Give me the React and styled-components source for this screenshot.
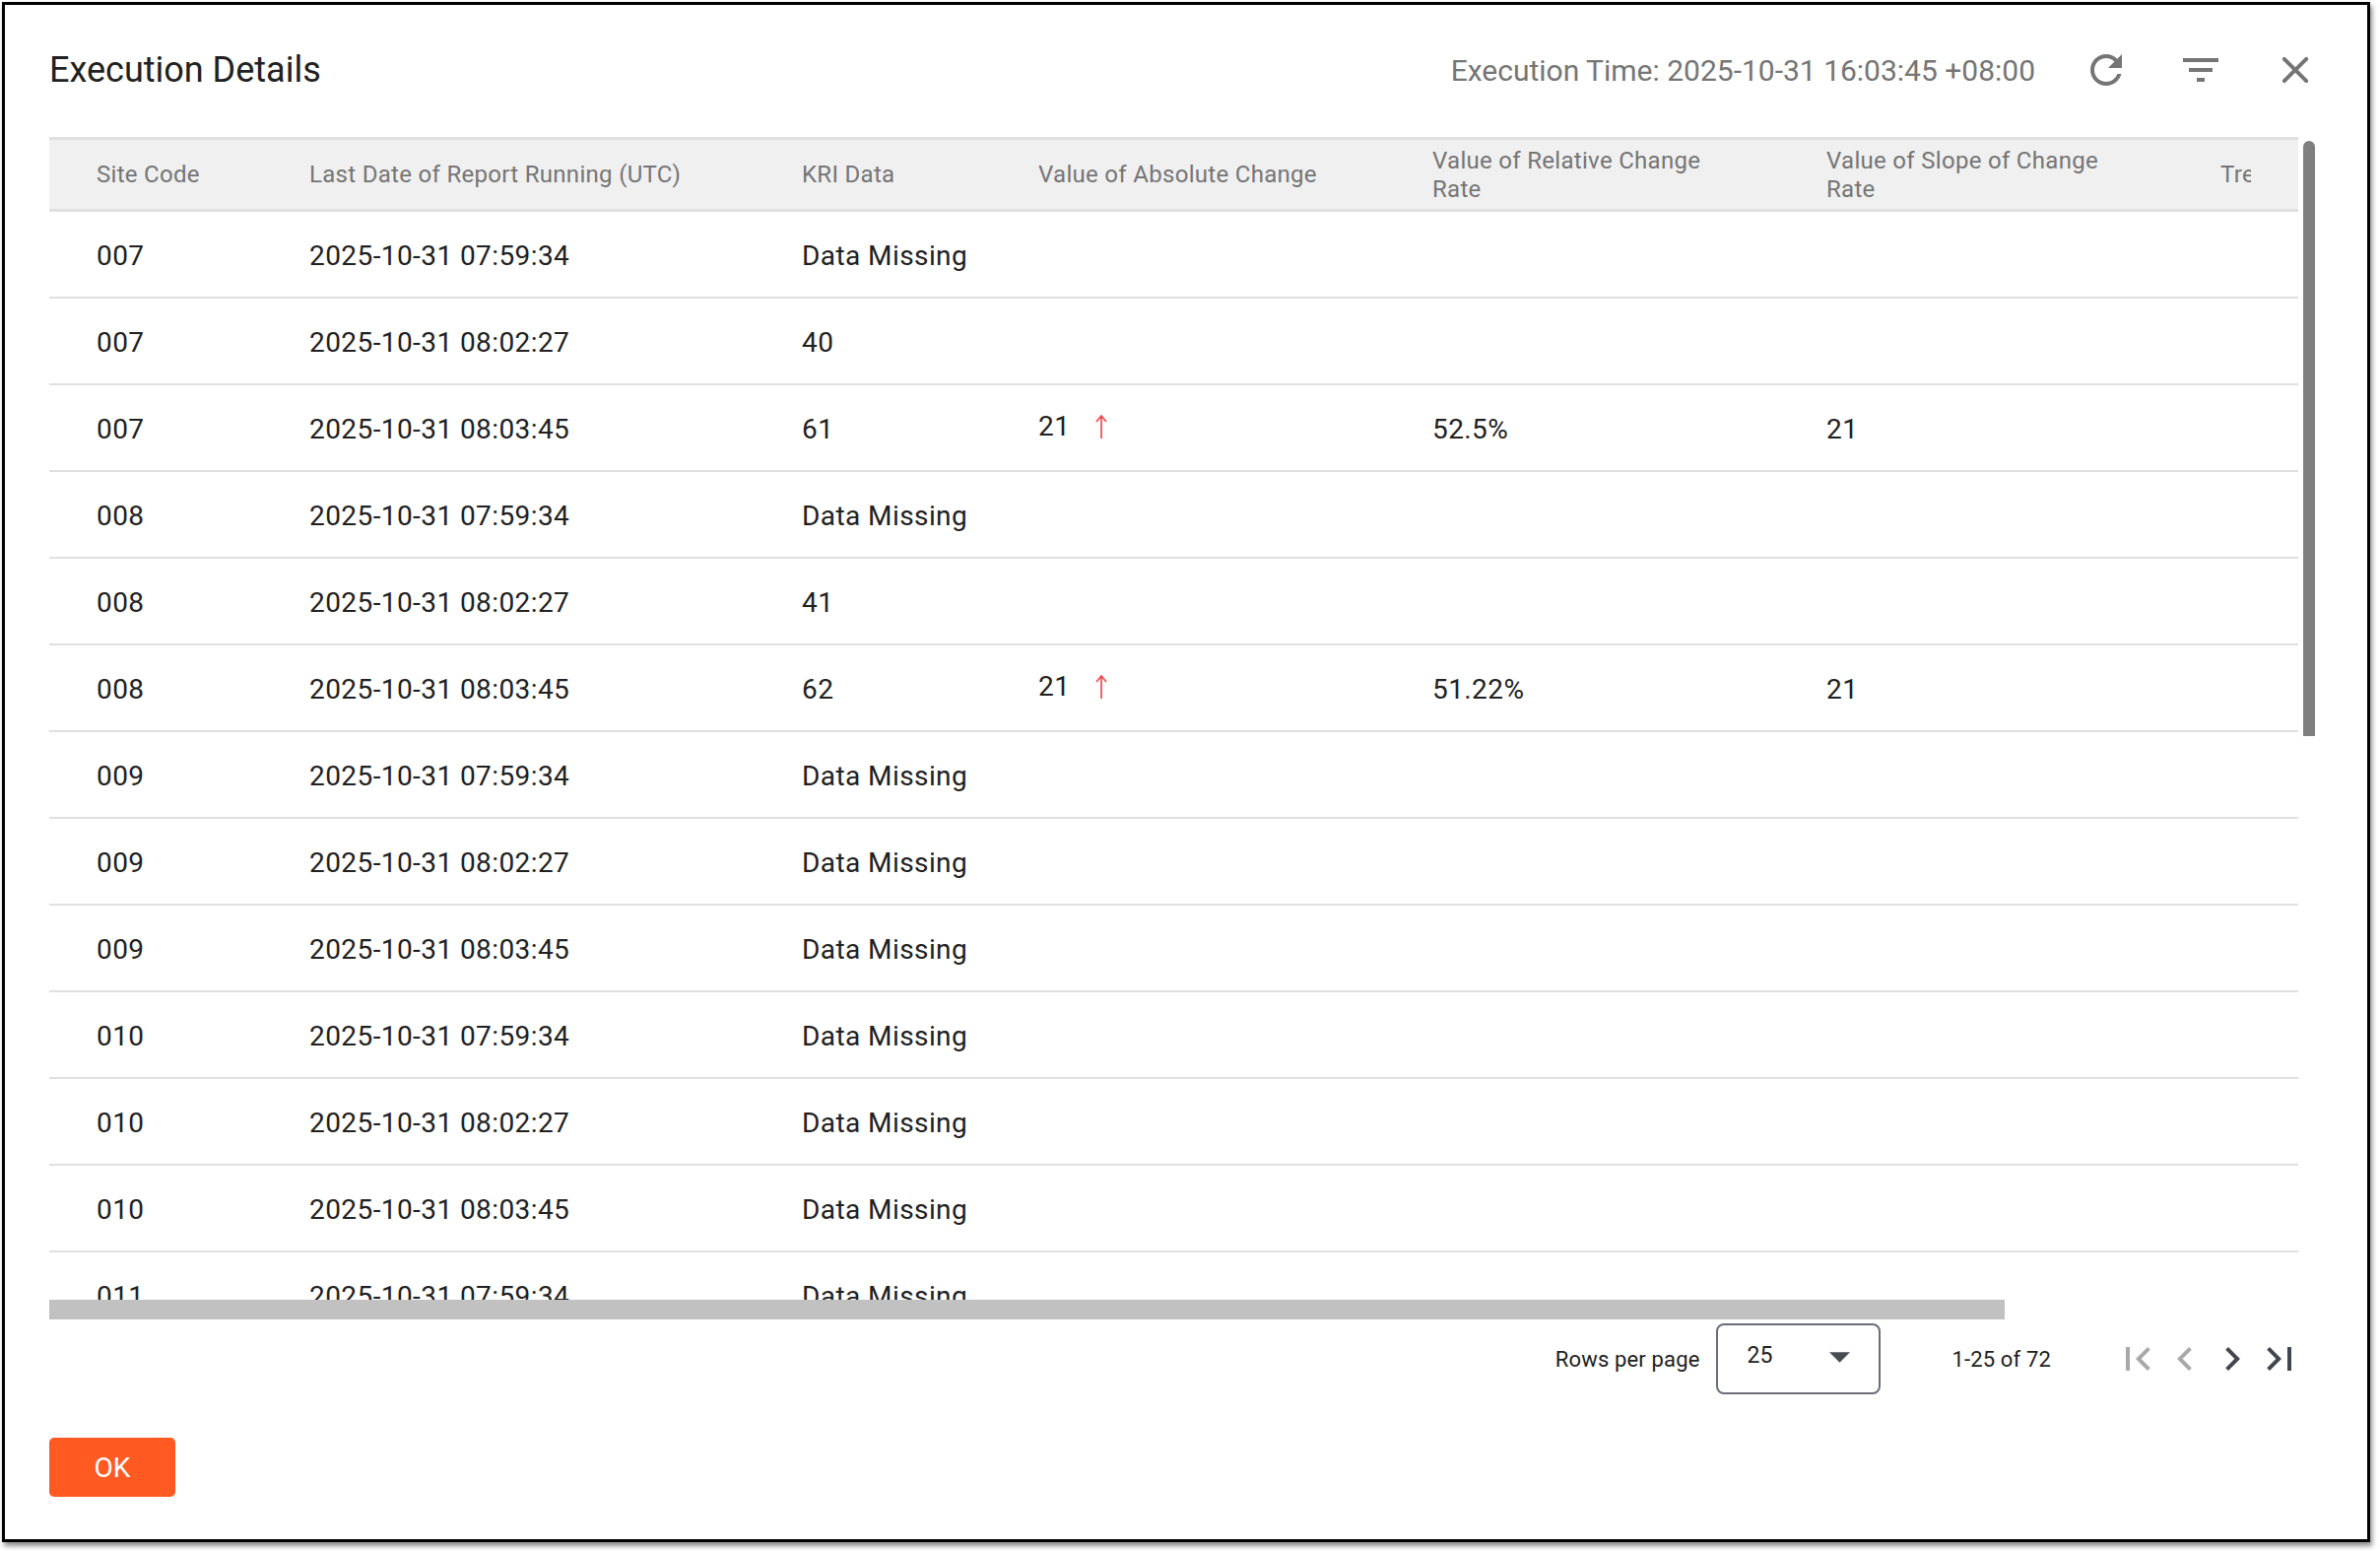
import styled, { createGlobalStyle } from 'styled-components';

const GlobalStyle = createGlobalStyle`
  html, body {
    margin: 0;
    background: #fff;
  }
  body {
    width: 2416px;
    height: 1574px;
    overflow: hidden;
    font-family: Roboto, "Liberation Sans", sans-serif;
  }
  * {
    box-sizing: border-box;
  }
`;

const Dialog = styled.div`
  display: flex;
  flex-direction: column;
  width: 2404px;
  height: 1563px;
  margin: 2px;
  padding: 42px 49px 0 45px;
  background: #fff;
  border: 3px solid #000;
  box-shadow: 2px 4px 5px rgba(0, 0, 0, 0.45);
`;

const Header = styled.header`
  display: flex;
  align-items: center;
  justify-content: space-between;
  height: 48px;
  margin-bottom: 44px;
`;

const Title = styled.h1`
  margin: 0;
  font-size: 36px;
  font-weight: 400;
  color: #212121;
`;

const HeaderTools = styled.div`
  display: flex;
  align-items: center;
  gap: 48px;
`;

const ExecutionTime = styled.span`
  font-size: 30px;
  color: #757575;
`;

const Icon = styled.svg`
  display: block;
  width: 48px;
  height: 48px;
  fill: ${(p) => p.$color || '#757575'};
  flex: none;
`;

const TableArea = styled.div`
  display: grid;
  grid-template-columns: 2283px 12px;
  column-gap: 5px;
`;

const TableViewport = styled.div`
  height: 1180px;
  overflow: hidden;
`;

const VScrollThumb = styled.div`
  width: 12px;
  height: 604px;
  margin-top: 4px;
  background: #7f7f7f;
  border-radius: 6px 6px 0 0;
`;

const HScrollThumb = styled.div`
  width: 1985px;
  height: 20px;
  background: #c1c1c1;
`;

const Table = styled.table`
  width: 2283px;
  table-layout: fixed;
  border-collapse: separate;
  border-spacing: 0;
`;

const HeadCell = styled.th`
  height: 76px;
  padding: 1px 48px 0;
  background: #f0f0f0;
  border-top: 3px solid #e0e0e0;
  border-bottom: 3px solid #e0e0e0;
  font-size: 24px;
  font-weight: 400;
  line-height: 29px;
  letter-spacing: 0.3px;
  text-align: left;
  color: #757575;
`;

const ClippedLabel = styled.div`
  overflow: hidden;
  white-space: nowrap;
`;

const Cell = styled.td`
  height: 88px;
  padding: 3px 48px 0;
  border-bottom: 2px solid #e0e0e0;
  font-size: 28px;
  letter-spacing: 0.42px;
  white-space: nowrap;
  color: #212121;
`;

const ChangeValue = styled.div`
  display: flex;
  align-items: center;
  gap: 26px;
  margin-bottom: 6px;
`;

const ArrowUp = styled.svg`
  display: block;
  width: 12px;
  height: 24px;
  fill: none;
  stroke: #ef4b4b;
  stroke-width: 1.7;
`;

const Pagination = styled.div`
  display: flex;
  align-items: center;
  justify-content: flex-end;
  padding: 4px 16px 0 0;
`;

const RowsLabel = styled.span`
  margin-right: 17px;
  font-size: 22px;
  letter-spacing: 0.15px;
  color: #212121;
`;

const PageSelect = styled.div`
  display: flex;
  align-items: center;
  justify-content: space-between;
  width: 167px;
  height: 72px;
  padding: 0 29px;
  border: 2px solid #6b6e78;
  border-radius: 8px;
`;

const SelectValue = styled.span`
  margin-bottom: 8px;
  font-size: 23px;
  letter-spacing: 0.15px;
  color: #212121;
`;

const SelectArrow = styled.svg`
  display: block;
  width: 21px;
  height: 11px;
  margin-bottom: 3px;
  fill: #4a4c55;
`;

const PageRange = styled.span`
  margin: 0 64px 0 72px;
  font-size: 22px;
  letter-spacing: 0.15px;
  color: #212121;
`;

const PagerIcons = styled.div`
  display: flex;
`;

const Footer = styled.div`
  margin-top: 44px;
`;

const OkButton = styled.button`
  width: 128px;
  height: 60px;
  padding: 0;
  background: #ff5a22;
  border: none;
  border-radius: 5px;
  font-family: inherit;
  font-size: 28px;
  color: #fff;
`;

const columns = [
  { label: 'Site Code', width: 216 },
  { label: 'Last Date of Report Running (UTC)', width: 500 },
  { label: 'KRI Data', width: 240 },
  { label: 'Value of Absolute Change', width: 400 },
  { label: 'Value of Relative Change Rate', width: 400 },
  { label: 'Value of Slope of Change Rate', width: 400 },
  { label: 'Trend', width: 127, clipped: true },
];

const t1 = '2025-10-31 07:59:34';
const t2 = '2025-10-31 08:02:27';
const t3 = '2025-10-31 08:03:45';
const missing = 'Data Missing';

const rows = [
  ['007', t1, missing],
  ['007', t2, '40'],
  ['007', t3, '61', '21', '52.5%', '21'],
  ['008', t1, missing],
  ['008', t2, '41'],
  ['008', t3, '62', '21', '51.22%', '21'],
  ['009', t1, missing],
  ['009', t2, missing],
  ['009', t3, missing],
  ['010', t1, missing],
  ['010', t2, missing],
  ['010', t3, missing],
  ['011', t1, missing],
  ['011', t2, missing],
];

function MuiIcon({ d, color }) {
  return (
    <Icon viewBox="0 0 24 24" $color={color}>
      <path d={d} />
    </Icon>
  );
}

export default function App() {
  return (
    <>
      <GlobalStyle />
      <Dialog>
        <Header>
          <Title>Execution Details</Title>
          <HeaderTools>
            <ExecutionTime>Execution Time: 2025-10-31 16:03:45 +08:00</ExecutionTime>
            <MuiIcon d="M17.65 6.35C16.2 4.9 14.21 4 12 4c-4.42 0-7.99 3.58-7.99 8s3.57 8 7.99 8c3.73 0 6.84-2.55 7.73-6h-2.08c-.82 2.33-3.04 4-5.65 4-3.31 0-6-2.69-6-6s2.69-6 6-6c1.66 0 3.14.69 4.22 1.78L13 11h7V4l-2.35 2.35z" />
            <MuiIcon d="M10 18h4v-2h-4v2zM3 6v2h18V6H3zm3 7h12v-2H6v2z" />
            <MuiIcon d="M18.3 5.71a.996.996 0 0 0-1.41 0L12 10.59 7.11 5.7a.996.996 0 0 0-1.41 1.41L10.59 12 5.7 16.89a.996.996 0 0 0 1.41 1.41L12 13.41l4.89 4.89a.996.996 0 0 0 1.41-1.41L13.41 12l4.89-4.89c.38-.38.38-1.02 0-1.4z" />
          </HeaderTools>
        </Header>

        <TableArea>
          <TableViewport>
            <Table>
              <colgroup>
                {columns.map((col) => (
                  <col key={col.label} width={col.width} />
                ))}
              </colgroup>
              <thead>
                <tr>
                  {columns.map((col) => (
                    <HeadCell key={col.label}>
                      {col.clipped ? <ClippedLabel>{col.label}</ClippedLabel> : col.label}
                    </HeadCell>
                  ))}
                </tr>
              </thead>
              <tbody>
                {rows.map((row, i) => (
                  <tr key={i}>
                    <Cell>{row[0]}</Cell>
                    <Cell>{row[1]}</Cell>
                    <Cell>{row[2]}</Cell>
                    <Cell>
                      {row[3] && (
                        <ChangeValue>
                          {row[3]}
                          <ArrowUp viewBox="0 0 12 24">
                            <path d="M6 24V1M1 7l5-6 5 6" />
                          </ArrowUp>
                        </ChangeValue>
                      )}
                    </Cell>
                    <Cell>{row[4]}</Cell>
                    <Cell>{row[5]}</Cell>
                    <Cell />
                  </tr>
                ))}
              </tbody>
            </Table>
          </TableViewport>
          <VScrollThumb />
          <HScrollThumb />
        </TableArea>

        <Pagination>
          <RowsLabel>Rows per page</RowsLabel>
          <PageSelect>
            <SelectValue>25</SelectValue>
            <SelectArrow viewBox="0 0 10 5">
              <path d="M0 0l5 5 5-5z" />
            </SelectArrow>
          </PageSelect>
          <PageRange>1-25 of 72</PageRange>
          <PagerIcons>
            <MuiIcon color="#a9a9a9" d="M18.41 16.59L13.82 12l4.59-4.59L17 6l-6 6 6 6zM6 6h2v12H6z" />
            <MuiIcon color="#a9a9a9" d="M15.41 7.41L14 6l-6 6 6 6 1.41-1.41L10.83 12z" />
            <MuiIcon color="#44464f" d="M10 6L8.59 7.41 13.17 12l-4.58 4.59L10 18l6-6z" />
            <MuiIcon color="#44464f" d="M5.59 7.41L10.18 12l-4.59 4.59L7 18l6-6-6-6zM16 6h2v12h-2z" />
          </PagerIcons>
        </Pagination>

        <Footer>
          <OkButton>OK</OkButton>
        </Footer>
      </Dialog>
    </>
  );
}
